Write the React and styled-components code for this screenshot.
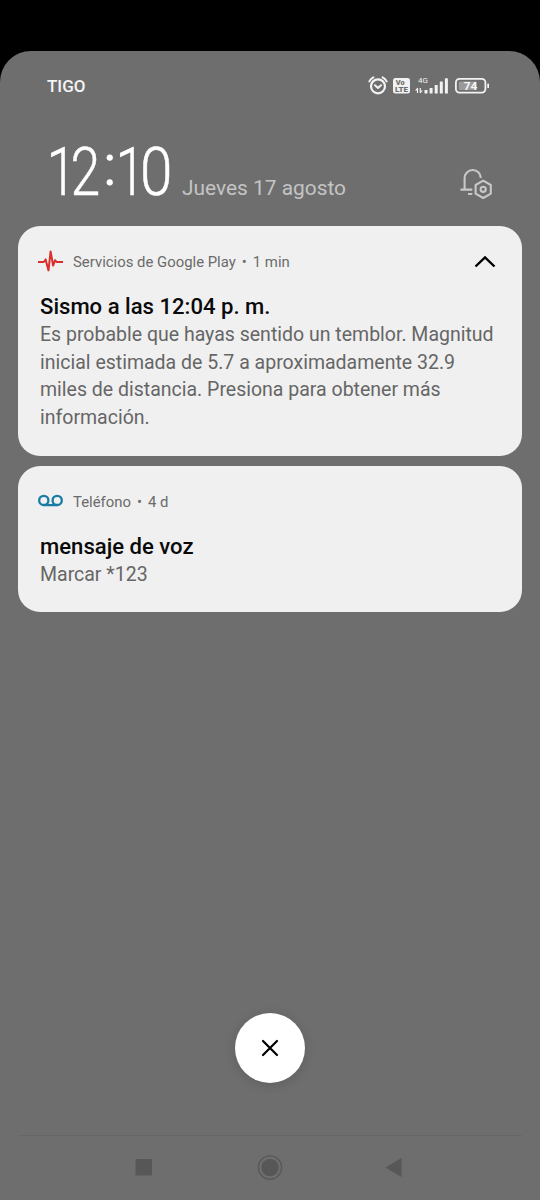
import React from "react";
import styled, { createGlobalStyle } from "styled-components";

const GlobalStyle = createGlobalStyle`
  * {
    box-sizing: border-box;
  }
  body {
    margin: 0;
    background: #000;
    font-family: Roboto, 'Liberation Sans', sans-serif;
  }
`

const Screen = styled.div`
  width: 540px;
  height: 1200px;
  padding-top: 51px;
  background: #000;
`

const Shade = styled.div`
  height: 1149px;
  display: flex;
  flex-direction: column;
  background: #6e6e6e;
  border-radius: 31px 31px 0 0;
`

const StatusBar = styled.div`
  height: 70px;
  padding: 0 50px 0 47px;
  display: flex;
  align-items: center;
  justify-content: space-between;
`

const Carrier = styled.span`
  font-size: 17px;
  font-weight: 500;
  color: #f4f4f4;
`

const Header = styled.div`
  height: 105px;
  padding: 0 46px 0 48px;
  display: flex;
  align-items: flex-start;
`

const Clock = styled.div`
  width: 134px;
  height: 80px;
  display: flex;
  font-size: 67px;
  line-height: 80px;
  font-weight: 300;
  color: #fff;
  white-space: nowrap;
  transform: scaleX(0.8);
  transform-origin: 0 0;
  padding: 11px 0 0;
`

const Digit = styled.span`
  margin-left: ${({ $shift }) => $shift || 0}px;
  letter-spacing: -7px;
  -webkit-text-stroke: 0.5px #fff;
  transform: scaleX(${({ $stretch }) => $stretch || 1});
  transform-origin: 0 0;
`

const Colon = styled.span`
  margin: -7px 0 0 12px;
  width: 14px;
  font-size: 58px;
  font-weight: 400;
  transform: scaleX(1.2);
`

const DateText = styled.span`
  flex: 1;
  font-size: 20.9px;
  line-height: 24px;
  margin-top: 55px;
  color: #c4c4c4;
`

const BellSlot = styled.div`
  margin-top: 46px;
  height: 34px;
`

const Notifications = styled.div`
  padding: 0 18px;
  display: flex;
  flex-direction: column;
  gap: 10px;
`

const Card = styled.article`
  height: ${({ $height }) => $height}px;
  padding: 20px 26px 0 20px;
  border-radius: 22px;
  background: #f0f0f0;
`

const CardHeader = styled.div`
  height: 30px;
  display: flex;
  align-items: center;
`

const AppName = styled.div`
  flex: 1;
  margin: 1px 0 0 10px;
  display: flex;
  gap: 6px;
  font-size: 14.9px;
  color: #6b6b6b;
`

const Title = styled.h2`
  margin: 16px 2px 0;
  font-size: 22.1px;
  line-height: 28px;
  font-weight: 500;
  color: #0a0a0a;
`

const Message = styled.p`
  margin: 1px 2px 0;
  font-size: 19.5px;
  line-height: 27.5px;
  color: #666;
  white-space: pre;
`

const CloseButton = styled.button`
  width: 70px;
  height: 70px;
  margin: auto auto 52.5px;
  padding: 0;
  border: none;
  border-radius: 50%;
  background: #fff;
  display: flex;
  align-items: center;
  justify-content: center;
  box-shadow: 0 2px 12px rgba(0, 0, 0, 0.14);
`

const NavBar = styled.nav`
  height: 65px;
  margin: 0 18px;
  padding-top: 16px;
  border-top: 1px solid #676767;
  display: flex;
  justify-content: center;
`

const StatusIcons = () => (
  <svg width="124" height="24" viewBox="366 74 124 24" fill="none">
    <g stroke="#f2f2f2" strokeLinecap="round" strokeLinejoin="round">
      <circle cx="378" cy="86.3" r="7" strokeWidth="2.2" />
      <path d="M369.3 81.4 Q370.8 78.6 373.4 77.3 M386.7 81.4 Q385.2 78.6 382.6 77.3" strokeWidth="2" />
      <path d="M375 85.2l3 2.7 3-2.7" strokeWidth="2" />
    </g>
    <rect x="393" y="78" width="17" height="15.5" rx="2.5" fill="#f2f2f2" />
    <g fontFamily="Roboto, sans-serif" fontWeight="900" fill="#6e6e6e">
      <text x="395.8" y="85" fontSize="7.4">Vo</text>
      <text x="395" y="92" fontSize="7.4" textLength="13" lengthAdjust="spacingAndGlyphs">LTE</text>
    </g>
    <text x="418" y="83" fontSize="8" fontFamily="Roboto, sans-serif" fill="#f2f2f2">4G</text>
    <g fill="#f2f2f2">
      <path d="M417.5 88v5M420.3 88v5" stroke="#f2f2f2" strokeWidth="1.2" />
      <path d="M415 90.6h2.6v-3zM420.2 90.4h2.6l-2.6 3z" />
      <rect x="424.5" y="90" width="3" height="3.5" rx="0.6" />
      <rect x="429.6" y="88" width="3" height="5.5" rx="0.6" />
      <rect x="434.7" y="85" width="3" height="8.5" rx="0.6" />
      <rect x="439.8" y="81.5" width="3" height="12" rx="0.6" />
      <rect x="444.9" y="78.2" width="3" height="15.3" rx="0.6" />
      <rect x="487.3" y="83.5" width="1.7" height="4.5" rx="0.6" />
    </g>
    <rect x="455.9" y="78.8" width="29.5" height="13.8" rx="3.6" stroke="#f2f2f2" strokeWidth="1.8" />
    <rect x="458.8" y="81.4" width="18" height="8.6" rx="1" fill="#9a9a9a" />
    <text x="463.8" y="90" fontSize="11.8" fontWeight="700" fontFamily="Roboto, sans-serif" fill="#f7f7f7">74</text>
  </svg>
)

const BellIcon = () => (
  <svg width="34" height="34" viewBox="460 167 34 34" fill="none" stroke="#c8c8c8" strokeWidth="2.1">
    <path d="M460.5 189.6h11.8M468 194h4.3M464.6 189.5v-11.3a8.1 8.1 0 0 1 16.2-.2" />
    <path d="M483.2 180.7l7.6 4.3v8.6l-7.6 4.4-7.6-4.4v-8.6z" strokeLinejoin="round" />
    <circle cx="483.2" cy="189.3" r="2.6" />
  </svg>
)

const QuakeIcon = () => (
  <svg width="25" height="22" viewBox="0 0 25 22" fill="none" stroke="#d9302c" strokeWidth="2" strokeLinejoin="round">
    <path d="M0 12h5.2l1.2-.6 1.2-2 2.9 11 2.1-19 2.5 14.2 2-5.4 1.4 1.8H25" />
  </svg>
)

const VoicemailIcon = () => (
  <svg width="25" height="22" viewBox="0 0 25 22" fill="none" stroke="#187ba4" strokeWidth="2.3">
    <circle cx="5.8" cy="10.4" r="4.6" />
    <circle cx="19.2" cy="10.4" r="4.6" />
    <path d="M5.8 15.1h13.4" />
  </svg>
)

const ChevronUp = () => (
  <svg width="22" height="14" viewBox="0 0 22 14" fill="none" stroke="#000" strokeWidth="2.4">
    <path d="M1.5 12.5L11 3.3l9.5 9.2" />
  </svg>
)

const NavIcons = () => (
  <svg width="270" height="30" viewBox="135 1152 270 30">
    <rect x="135.5" y="1159" width="16.5" height="16.5" rx="1" fill="#575757" />
    <circle cx="270" cy="1167.5" r="11.6" fill="none" stroke="#575757" strokeWidth="1.4" />
    <circle cx="270" cy="1167.5" r="8.7" fill="#575757" />
    <path d="M401.5 1158v19l-16-9.5z" fill="#575757" />
  </svg>
)

function App() {
  return (
    <Screen>
      <GlobalStyle />
      <Shade>
        <StatusBar>
          <Carrier>TIGO</Carrier>
          <StatusIcons />
        </StatusBar>
        <Header>
          <Clock>
            <Digit $shift={-2}>1</Digit>
            <Digit>2</Digit>
            <Colon>:</Colon>
            <Digit>1</Digit>
            <Digit $stretch={1.09}>0</Digit>
          </Clock>
          <DateText>Jueves 17 agosto</DateText>
          <BellSlot>
            <BellIcon />
          </BellSlot>
        </Header>
        <Notifications>
          <Card $height={230}>
            <CardHeader>
              <QuakeIcon />
              <AppName>
                <span>Servicios de Google Play</span>
                <span>•</span>
                <span>1 min</span>
              </AppName>
              <ChevronUp />
            </CardHeader>
            <Title>Sismo a las 12:04 p. m.</Title>
            <Message>
              {"Es probable que hayas sentido un temblor. Magnitud\ninicial estimada de 5.7 a aproximadamente 32.9\nmiles de distancia. Presiona para obtener más\ninformación."}
            </Message>
          </Card>
          <Card $height={146}>
            <CardHeader>
              <VoicemailIcon />
              <AppName>
                <span>Teléfono</span>
                <span>•</span>
                <span>4 d</span>
              </AppName>
            </CardHeader>
            <Title>mensaje de voz</Title>
            <Message>Marcar *123</Message>
          </Card>
        </Notifications>
        <CloseButton>
          <svg width="18" height="18" viewBox="0 0 18 18" stroke="#000" strokeWidth="2.2" strokeLinecap="round">
            <path d="M2 2l14 14M16 2L2 16" />
          </svg>
        </CloseButton>
        <NavBar>
          <NavIcons />
        </NavBar>
      </Shade>
    </Screen>
  )
}

export default App
